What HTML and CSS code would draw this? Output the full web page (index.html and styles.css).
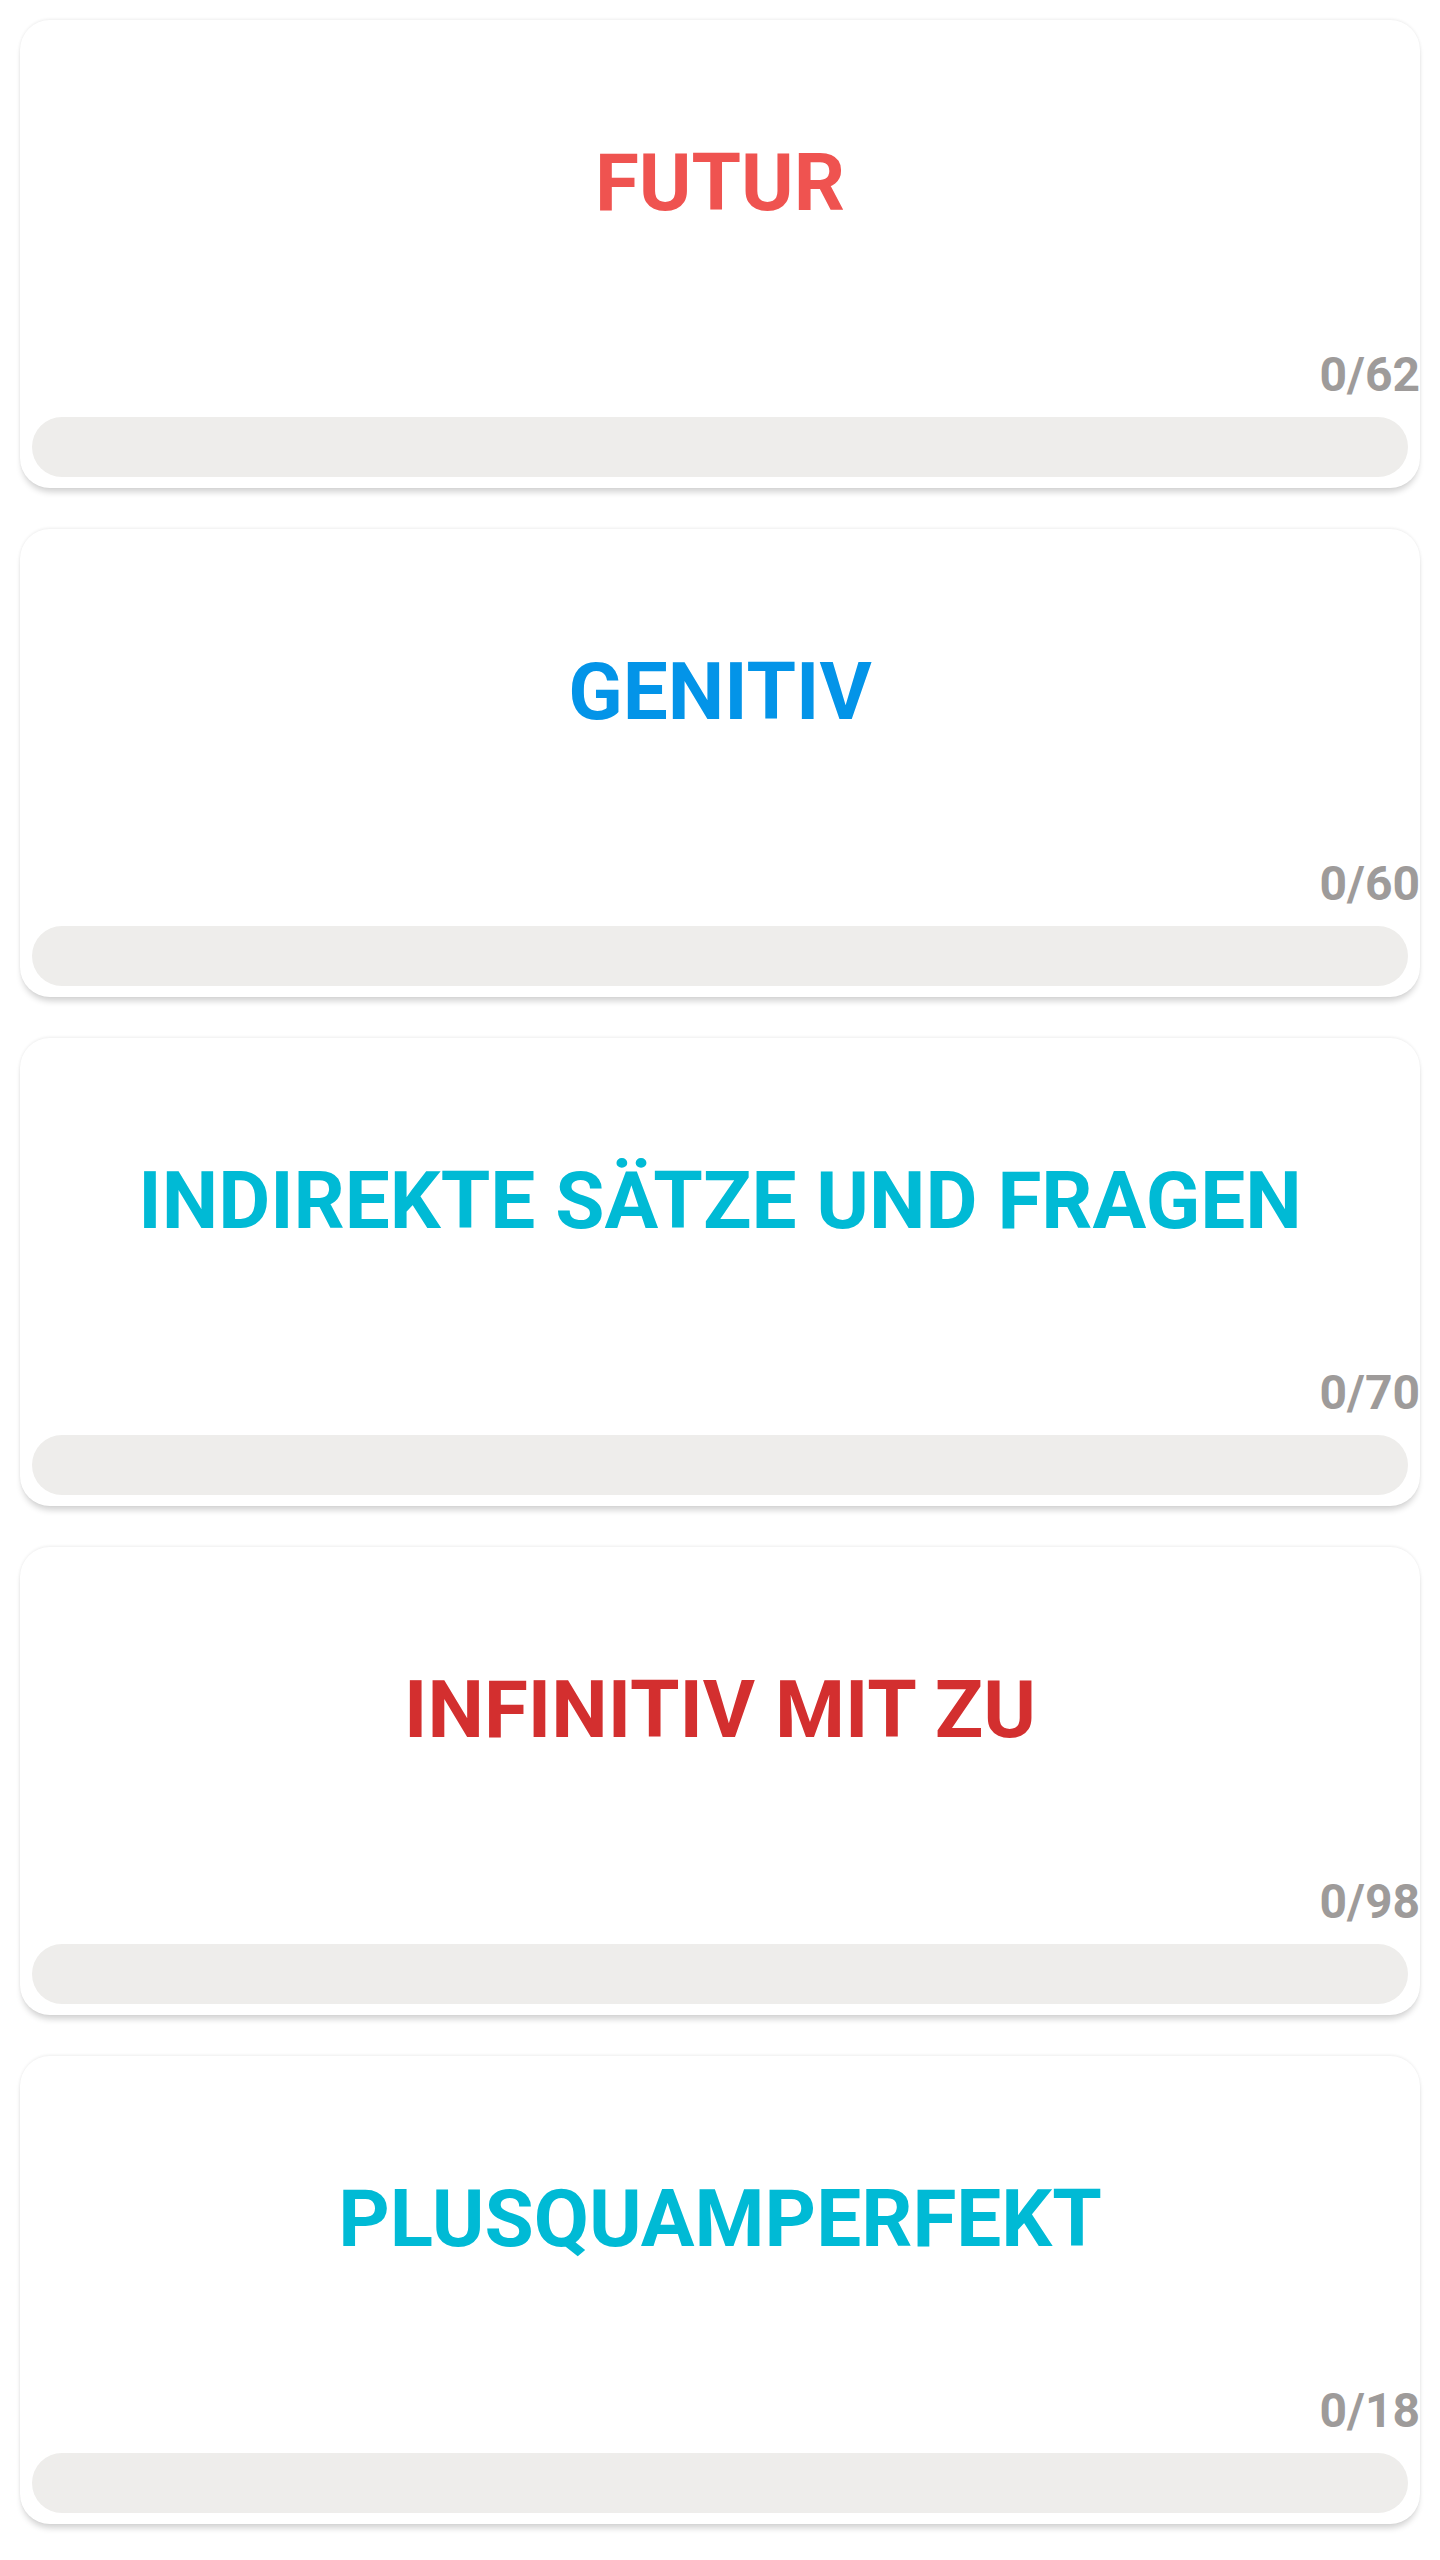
FILE: index.html
```html
<!DOCTYPE html>
<html lang="de">
<head>
    <meta charset="UTF-8">
    <meta name="viewport" content="width=device-width, initial-scale=1.0">
    <title>Grammatik</title>
    <link rel="stylesheet" href="styles.css">
</head>
<body>

<div class="topic-list">
    <div class="topic-card">
        <h2 class="topic-title red-light">FUTUR</h2>
        <div class="topic-count">0/62</div>
        <div class="progress"><div class="progress-fill" style="width: 0%"></div></div>
    </div>

    <div class="topic-card">
        <h2 class="topic-title blue">GENITIV</h2>
        <div class="topic-count">0/60</div>
        <div class="progress"><div class="progress-fill" style="width: 0%"></div></div>
    </div>

    <div class="topic-card">
        <h2 class="topic-title cyan">INDIREKTE SÄTZE UND FRAGEN</h2>
        <div class="topic-count">0/70</div>
        <div class="progress"><div class="progress-fill" style="width: 0%"></div></div>
    </div>

    <div class="topic-card">
        <h2 class="topic-title red">INFINITIV MIT ZU</h2>
        <div class="topic-count">0/98</div>
        <div class="progress"><div class="progress-fill" style="width: 0%"></div></div>
    </div>

    <div class="topic-card">
        <h2 class="topic-title cyan">PLUSQUAMPERFEKT</h2>
        <div class="topic-count">0/18</div>
        <div class="progress"><div class="progress-fill" style="width: 0%"></div></div>
    </div>
</div>

</body>
</html>
```

FILE: styles.css
```css
body {
    font-family: Roboto, "Liberation Sans", sans-serif;
    margin: 0;
    padding: 0;
    background-color: #ffffff;
}

.topic-list {
    display: flex;
    flex-direction: column;
    gap: 41px;
    padding: 20px;
}

.topic-card {
    display: flex;
    flex-direction: column;
    height: 468px;
    box-sizing: border-box;
    padding-bottom: 11px;
    background-color: white;
    border-radius: 30px;
    box-shadow: 0 6px 6px -2px rgba(0, 0, 0, 0.18), 0 -1px 3px rgba(0, 0, 0, 0.07);
}

.topic-title {
    margin: 116px 0 0;
    font-size: 80px;
    line-height: 94px;
    font-weight: 700;
    text-align: center;
}

.red-light {
    color: #ef5350;
}

.blue {
    color: #0394e8;
}

.cyan {
    color: #00bad5;
}

.red {
    color: #d32f2f;
}

.topic-count {
    margin-top: auto;
    font-size: 48px;
    line-height: 56px;
    font-weight: 700;
    text-align: right;
    color: #9e9b9a;
}

.progress {
    margin: 14px 12px 0;
    height: 60px;
    border-radius: 30px;
    background-color: #eeedeb;
    overflow: hidden;
}

.progress-fill {
    height: 100%;
    background-color: #4caf50;
}
```
